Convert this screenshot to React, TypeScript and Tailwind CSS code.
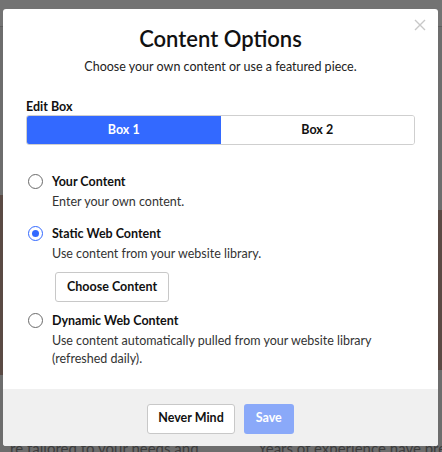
import React from "react";

function Radio({ checked }: { checked?: boolean }) {
  return checked ? (
    <span className="mt-[1px] flex h-[15px] w-[15px] shrink-0 items-center justify-center rounded-full border-[1.5px] border-[#3369ff]">
      <span className="h-[7px] w-[7px] rounded-full bg-[#3369ff]" />
    </span>
  ) : (
    <span className="mt-[1px] h-[15px] w-[15px] shrink-0 rounded-full border-[1.5px] border-[#6a6a6a]" />
  );
}

export default function App() {
  return (
    <div
      className="relative h-[452px] w-[442px] overflow-hidden bg-[#6d6d6d]"
      style={{ fontFamily: "Lato, 'Noto Sans', sans-serif" }}
    >
      {/* background page hints */}
      <div className="h-[27px] bg-[#737373] border-b border-[#5e5e5e]" />
      <div className="absolute left-0 top-[195px] h-[180px] w-[4px] bg-[#5a4a44]" />
      <div className="absolute right-0 top-[210px] h-[160px] w-[5px] bg-[#5a4a44]" />
      <div className="absolute bottom-[-7px] left-[10px] text-[15px] text-[#3c3c3c]">re tailored to your needs and</div>
      <div className="absolute bottom-[-7px] left-[258px] text-[15px] text-[#3c3c3c] whitespace-nowrap">Years of experience have prepa</div>

      {/* modal */}
      <div className="absolute left-[3px] top-[9px] flex h-[437px] w-[435px] flex-col overflow-hidden rounded-[3px] bg-white">
        <button className="absolute right-[12px] top-[10px] text-[#c8c8c8]">
          <svg width="12" height="12" viewBox="0 0 12 12" stroke="currentColor" strokeWidth="1.4">
            <path d="M1 1L11 11M11 1L1 11" />
          </svg>
        </button>
        <div className="flex-1 px-[23px]">
          <h1 className="mt-[15px] text-center text-[22px] font-semibold leading-[30px] text-[#111]">Content Options</h1>
          <p className="mt-[4px] text-center text-[12.5px] leading-[18px] text-[#222]">
            Choose your own content or use a featured piece.
          </p>
          <div className="mt-[24px] text-[12.5px] font-bold leading-[14px] text-[#111]">Edit Box</div>
          <div className="mt-[1px] flex h-[30px] overflow-hidden rounded-[3px] border border-[#cfcfcf]">
            <div className="flex flex-1 items-center justify-center bg-[#3369ff] text-[12.5px] font-bold text-white">Box 1</div>
            <div className="flex flex-1 items-center justify-center bg-white text-[12.5px] font-bold text-[#111]">Box 2</div>
          </div>

          <div className="mt-[28px] flex flex-col gap-[14px] pl-[2px]">
            <div className="flex gap-[9px]">
              <Radio />
              <div>
                <div className="text-[12.5px] font-bold leading-[17px] text-[#111]">Your Content</div>
                <div className="mt-[3px] text-[12.5px] leading-[18px] text-[#333]">Enter your own content.</div>
              </div>
            </div>
            <div className="flex gap-[9px]">
              <Radio checked />
              <div>
                <div className="text-[12.5px] font-bold leading-[17px] text-[#111]">Static Web Content</div>
                <div className="mt-[3px] text-[12.5px] leading-[18px] text-[#333]">Use content from your website library.</div>
                <button className="ml-[3px] mt-[9px] h-[30px] rounded-[3px] border border-[#c8c8c8] bg-white px-[11px] text-[12.5px] font-bold text-[#111]">
                  Choose Content
                </button>
              </div>
            </div>
            <div className="-mt-[4px] flex gap-[9px]">
              <Radio />
              <div>
                <div className="text-[12.5px] font-bold leading-[17px] text-[#111]">Dynamic Web Content</div>
                <div className="mt-[3px] text-[12.5px] leading-[18px] text-[#333]">
                  Use content automatically pulled from your website library
                  <br />
                  (refreshed daily).
                </div>
              </div>
            </div>
          </div>
        </div>
        <div className="flex h-[57px] items-center justify-center gap-[9px] bg-[#f0f0f0] pt-[2px]">
          <button className="h-[30px] rounded-[3px] border border-[#c8c8c8] bg-white px-[10px] text-[12.5px] font-bold text-[#111]">
            Never Mind
          </button>
          <button className="h-[30px] rounded-[3px] bg-[#8aa9f9] px-[12px] text-[12.5px] font-bold text-white">Save</button>
        </div>
      </div>
    </div>
  );
}
